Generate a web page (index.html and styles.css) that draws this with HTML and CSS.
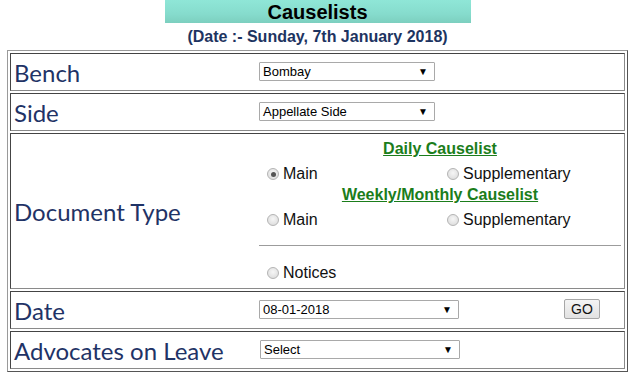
FILE: index.html
```html
<!DOCTYPE html>
<html>
<head>
<meta charset="utf-8">
<link rel="stylesheet" href="styles.css">
</head>
<body>
<div class="page">
  <div class="title">Causelists</div>
  <div class="date">(Date :- Sunday, 7th January 2018)</div>
  <div class="panel">
    <div class="row">
      <div class="label">Bench</div>
      <div class="field">
        <div class="sel w176"><span class="val">Bombay</span><span class="arrow">&#9660;</span></div>
      </div>
    </div>
    <div class="row">
      <div class="label">Side</div>
      <div class="field">
        <div class="sel w176"><span class="val">Appellate Side</span><span class="arrow">&#9660;</span></div>
      </div>
    </div>
    <div class="row doc">
      <div class="label">Document Type</div>
      <div class="field options">
        <div class="head">Daily Causelist</div>
        <div class="radios">
          <label class="opt"><span class="radio checked"></span>Main</label>
          <label class="opt"><span class="radio"></span>Supplementary</label>
        </div>
        <div class="head">Weekly/Monthly Causelist</div>
        <div class="radios">
          <label class="opt"><span class="radio"></span>Main</label>
          <label class="opt"><span class="radio"></span>Supplementary</label>
        </div>
        <div class="rule"></div>
        <div class="radios single">
          <label class="opt"><span class="radio"></span>Notices</label>
        </div>
      </div>
    </div>
    <div class="row">
      <div class="label">Date</div>
      <div class="field">
        <div class="sel w200"><span class="val">08-01-2018</span><span class="arrow">&#9660;</span></div>
        <button class="go">GO</button>
      </div>
    </div>
    <div class="row">
      <div class="label">Advocates on Leave</div>
      <div class="field">
        <div class="sel w200 shift"><span class="val">Select</span><span class="arrow">&#9660;</span></div>
      </div>
    </div>
  </div>
</div>
</body>
</html>
```
FILE: styles.css
```css
html, body {
  margin: 0;
  padding: 0;
  background: #ffffff;
}
body {
  font-family: "Liberation Sans", Arial, sans-serif;
}
.page {
  width: 621px;
  margin-left: 7px;
}
.title {
  width: 306px;
  height: 23px;
  margin: 0 auto;
  background: linear-gradient(#8fe6d7, #86dccd 60%, #7ccfbf);
  text-align: center;
  font-weight: bold;
  font-size: 20px;
  line-height: 24px;
  color: #000;
}
.date {
  margin-top: 5px;
  text-align: center;
  font-weight: bold;
  font-size: 16px;
  line-height: 18px;
  color: #1d3461;
}
.panel {
  margin-top: 4px;
  border: 1px solid;
  border-color: #9a9a9a #555 #555 #9a9a9a;
  padding: 2px;
  display: flex;
  flex-direction: column;
  gap: 2px;
}
.row {
  height: 36px;
  border: 1px solid;
  border-color: #444 #8a8a8a #8a8a8a #444;
  display: grid;
  grid-template-columns: 248px 1fr;
  align-items: center;
}
.row.doc {
  height: 154px;
}
.label {
  padding-left: 3px;
  font-family: Lato, "Open Sans", sans-serif;
  font-size: 24px;
  line-height: 30px;
  color: #1f3366;
  padding-top: 2px;
}
.field {
  display: flex;
  align-items: center;
  padding-right: 3px;
}
.sel {
  position: relative;
  box-sizing: border-box;
  height: 19px;
  border: 1px solid #a9a9a9;
  border-radius: 1px;
  background: #fff;
  font-size: 13px;
  line-height: 17px;
  color: #000;
  padding-left: 3px;
}
.sel.w176 { width: 176px; margin-top: -1px; }
.sel.w200 { width: 200px; margin-top: -2px; }
.sel.shift { margin-left: 1px; margin-top: -1px; }
.arrow {
  position: absolute;
  right: 6px;
  top: 0;
  font-size: 10px;
  line-height: 17px;
}
.go {
  margin-left: auto;
  margin-right: 21px;
  margin-top: -2px;
  width: 36px;
  height: 20px;
  padding: 0;
  border: 1px solid #a7a7a7;
  border-radius: 2px;
  background: linear-gradient(#f4f4f4, #e2e2e2);
  font-family: "Liberation Sans", Arial, sans-serif;
  font-size: 14px;
  color: #111;
}
.options {
  flex-direction: column;
  align-items: stretch;
  align-self: stretch;
  padding-top: 6px;
}
.head {
  text-align: center;
  font-weight: bold;
  font-size: 16px;
  line-height: 18px;
  color: #1b7d1b;
  text-decoration: underline;
}
.radios {
  display: grid;
  grid-template-columns: 180px 1fr;
  height: 24px;
  margin-top: 4px;
}
.radios.single {
  margin-top: 15px;
}
.opt {
  display: flex;
  align-items: center;
  font-size: 16px;
  line-height: 24px;
  color: #111;
}
.radio {
  box-sizing: border-box;
  width: 12px;
  height: 12px;
  margin-left: 8px;
  margin-right: 4px;
  border-radius: 50%;
  border: 1px solid #b4b4b4;
  background: radial-gradient(circle at 50% 40%, #f6f6f6, #d8d8d8);
  position: relative;
}
.radio.checked::after {
  content: "";
  position: absolute;
  left: 2.5px;
  top: 2.5px;
  width: 5px;
  height: 5px;
  border-radius: 50%;
  background: #555;
}
.rule {
  height: 1px;
  background: #9c9c9c;
  margin-top: 13px;
}
```
